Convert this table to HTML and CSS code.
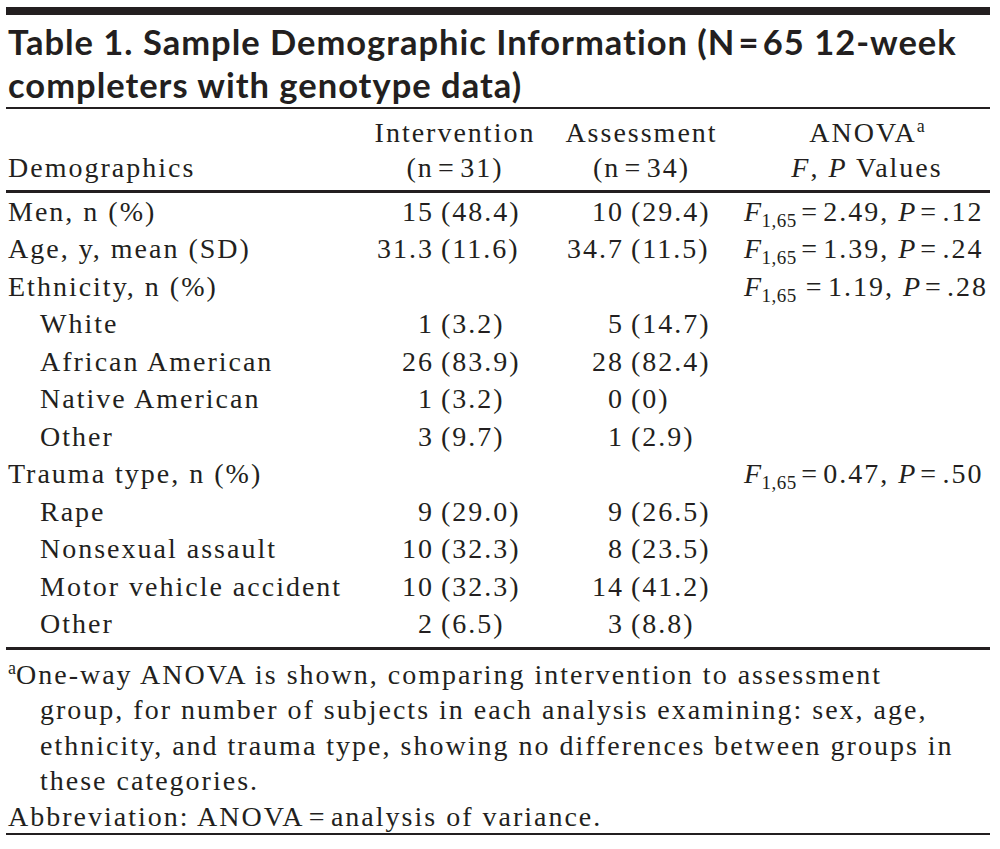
FILE: index.html
```html
<!DOCTYPE html>
<html lang="en">
<head>
<meta charset="utf-8">
<title>Table 1. Sample Demographic Information</title>
<link rel="stylesheet" href="styles.css">
</head>
<body>
<div class="page">
  <div class="rule rule-thick"></div>
  <h1 class="title">Table 1. Sample Demographic Information (N&#8202;=&#8202;65 12-week<br>completers with genotype data)</h1>
  <div class="rule rule-thin"></div>

  <div class="thead grid">
    <div class="hcell hlabel">Demographics</div>
    <div class="hcell hnum hnum-a">Intervention<br>(n&#8202;=&#8202;31)</div>
    <div class="hcell hnum hnum-b">Assessment<br>(n&#8202;=&#8202;34)</div>
    <div class="hcell hstat">ANOVA<sup class="fn">a</sup><br><i>F</i>, <i>P</i> Values</div>
  </div>
  <div class="rule rule-mid"></div>

  <div class="tbody grid">
    <div class="label">Men, n (%)</div>
    <div class="num"><span class="cnt">15</span><span class="pct">(48.4)</span></div>
    <div class="num num-b"><span class="cnt">10</span><span class="pct">(29.4)</span></div>
    <div class="stat"><i>F</i><sub class="df">1,65</sub>&#8202;=&#8202;2.49, <i>P</i>&#8202;=&#8202;.12</div>

    <div class="label">Age, y, mean (SD)</div>
    <div class="num"><span class="cnt">31.3</span><span class="pct">(11.6)</span></div>
    <div class="num num-b"><span class="cnt">34.7</span><span class="pct">(11.5)</span></div>
    <div class="stat"><i>F</i><sub class="df">1,65</sub>&#8202;=&#8202;1.39, <i>P</i>&#8202;=&#8202;.24</div>

    <div class="label">Ethnicity, n (%)</div>
    <div class="num"></div>
    <div class="num num-b"></div>
    <div class="stat"><i>F</i><sub class="df">1,65</sub> =&#8202;1.19, <i>P</i>&#8202;=&#8202;.28</div>

    <div class="label sub">White</div>
    <div class="num"><span class="cnt">1</span><span class="pct">(3.2)</span></div>
    <div class="num num-b"><span class="cnt">5</span><span class="pct">(14.7)</span></div>
    <div class="stat"></div>

    <div class="label sub">African American</div>
    <div class="num"><span class="cnt">26</span><span class="pct">(83.9)</span></div>
    <div class="num num-b"><span class="cnt">28</span><span class="pct">(82.4)</span></div>
    <div class="stat"></div>

    <div class="label sub">Native American</div>
    <div class="num"><span class="cnt">1</span><span class="pct">(3.2)</span></div>
    <div class="num num-b"><span class="cnt">0</span><span class="pct">(0)</span></div>
    <div class="stat"></div>

    <div class="label sub">Other</div>
    <div class="num"><span class="cnt">3</span><span class="pct">(9.7)</span></div>
    <div class="num num-b"><span class="cnt">1</span><span class="pct">(2.9)</span></div>
    <div class="stat"></div>

    <div class="label">Trauma type, n (%)</div>
    <div class="num"></div>
    <div class="num num-b"></div>
    <div class="stat"><i>F</i><sub class="df">1,65</sub>&#8202;=&#8202;0.47, <i>P</i>&#8202;=&#8202;.50</div>

    <div class="label sub">Rape</div>
    <div class="num"><span class="cnt">9</span><span class="pct">(29.0)</span></div>
    <div class="num num-b"><span class="cnt">9</span><span class="pct">(26.5)</span></div>
    <div class="stat"></div>

    <div class="label sub">Nonsexual assault</div>
    <div class="num"><span class="cnt">10</span><span class="pct">(32.3)</span></div>
    <div class="num num-b"><span class="cnt">8</span><span class="pct">(23.5)</span></div>
    <div class="stat"></div>

    <div class="label sub">Motor vehicle accident</div>
    <div class="num"><span class="cnt">10</span><span class="pct">(32.3)</span></div>
    <div class="num num-b"><span class="cnt">14</span><span class="pct">(41.2)</span></div>
    <div class="stat"></div>

    <div class="label sub">Other</div>
    <div class="num"><span class="cnt">2</span><span class="pct">(6.5)</span></div>
    <div class="num num-b"><span class="cnt">3</span><span class="pct">(8.8)</span></div>
    <div class="stat"></div>
  </div>
  <div class="rule rule-mid rule-foot"></div>

  <div class="notes">
    <p class="note hanging"><sup class="fn">a</sup>One-way ANOVA is shown, comparing intervention to assessment<br>group, for number of subjects in each analysis examining: sex, age,<br>ethnicity, and trauma type, showing no differences between groups in<br>these categories.</p>
    <p class="note">Abbreviation: ANOVA&#8202;=&#8202;analysis of variance.</p>
  </div>
  <div class="rule rule-thin rule-end"></div>
</div>
</body>
</html>
```

FILE: styles.css
```css
html, body {
  margin: 0;
  padding: 0;
  background: #ffffff;
}

body {
  color: #231f20;
  font-family: "Liberation Serif", "Times New Roman", serif;
  font-size: 28px;
  letter-spacing: 2px;
}

.page {
  width: 984px;
  margin-left: 6px;
  padding-top: 7px;
}

.rule {
  background: #231f20;
}

.rule-thick {
  height: 8px;
}

.rule-thin {
  height: 2px;
}

.rule-mid {
  height: 3px;
}

.title {
  margin: 6px 0 0.8px 2px;
  font-family: Lato, "Open Sans", sans-serif;
  font-weight: 700;
  font-size: 34.5px;
  line-height: 42.6px;
  letter-spacing: 1px;
  color: #231f20;
  white-space: nowrap;
}

.grid {
  display: grid;
  grid-template-columns: 359px 188px 189px 1fr;
  padding-left: 2px;
}

.thead {
  padding: 5.75px 0 5.25px 2px;
  line-height: 35px;
}

.hcell {
  white-space: nowrap;
}

.hlabel {
  align-self: end;
}

.hnum {
  text-align: center;
}

.hnum-a {
  padding-right: 12px;
}

.hnum-b {
  padding-right: 16px;
}

.hstat {
  text-align: center;
  padding-right: 0;
}

.tbody {
  line-height: 37.5px;
}

.label {
  white-space: nowrap;
}

.label.sub {
  padding-left: 32px;
}

.num {
  display: flex;
  white-space: nowrap;
}

.cnt {
  width: 67px;
  text-align: right;
  flex: none;
}

.pct {
  margin-left: 7px;
}

.num-b .cnt {
  width: 69px;
}

.stat {
  white-space: nowrap;
}

.stat i {
  letter-spacing: 0.5px;
}

.df {
  font-size: 19px;
  line-height: 0;
  vertical-align: -6px;
  letter-spacing: 0.5px;
}

.fn {
  font-size: 18px;
  line-height: 0;
  vertical-align: 10px;
  letter-spacing: 0;
}

.rule-foot {
  margin-top: 4px;
}

.notes {
  margin-top: 7px;
  padding-left: 2px;
}

.note {
  margin: 0;
  line-height: 35.5px;
  white-space: nowrap;
  letter-spacing: 2px;
}

.hanging {
  padding-left: 32px;
  text-indent: -32px;
}

.rule-end {
  margin-top: -1px;
}
```
